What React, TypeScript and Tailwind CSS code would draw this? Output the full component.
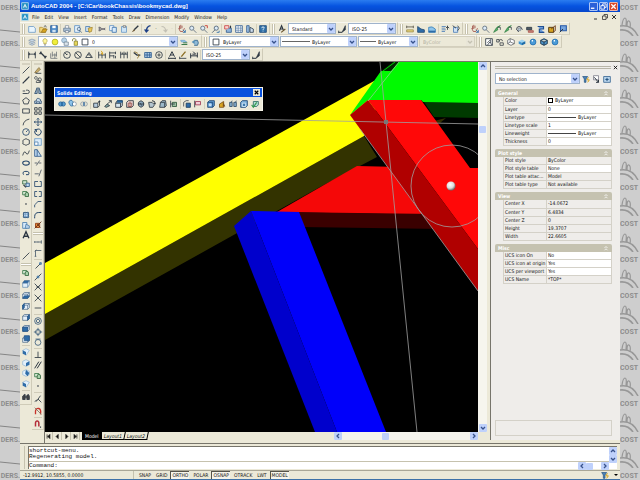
import type { ReactNode } from "react";

const INK = "#2d3742";
const BLUE = "#2f6da8";
const SKY = "#8fc4ea";
const GOLD = "#d9a520";
const GREEN = "#2f9a4a";
const RED = "#c8322a";

function P({ d, c = INK, f = "none", w = 1 }: { d: string; c?: string; f?: string; w?: number }) {
  return <path d={d} stroke={c} fill={f} strokeWidth={w} />;
}

const magnifier = <P d="M6 4a2.5 2.5 0 1 1-5 0a2.5 2.5 0 1 1 5 0M5.5 6L9 9.5" c="#5b6b7c" f="#dcebf7" />;
const cube = <P d="M1 4L3 2H9V7L7 9H1ZM1 4H7V9M7 4L9 2" c="#3f5f7f" f="#e4f0fa" w={0.8} />;
const pan = <P d="M2 1V5M5 1V4M3.5 0V5M1 4L3 8H6L8 4" c="#a05048" />;

const glyphs: Record<string, ReactNode> = {
  new: <P d="M1 2H7L9 4V9H1Z" c="#6f9cc8" f="#e9f5fd" />,
  open: <><P d="M1 3H4L5 4H8V9H1Z" c="#a98428" f="#f3d77c" w={0.8} /><P d="M3 9L5 5H10L8 9Z" c="#8a6a1c" f={GOLD} w={0.8} /><P d="M6 2L8 1L9 3" w={0.8} /></>,
  save: <><P d="M1 1H9V9H1Z" c="#2b5c95" f="#4d8cc8" /><P d="M3 1H7V4H3Z" c="none" f="#fff" /><P d="M3 6H7V9H3Z" c="none" f="#cfe2f3" /></>,
  print: <><P d="M3 4V1H7V4" c="#6f8090" f="#fff" w={0.8} /><P d="M1 4H9V8H1Z" c="#5b7086" f="#a9bfd4" w={0.8} /><P d="M3 7H7V9.5H3Z" c="#5b7086" f="#fff" w={0.8} /></>,
  preview: <><P d="M1 1H7V9H1Z" c="#5c8fc4" f="#e9f5fd" /><P d="M8 5a2 2 0 1 1-4 0a2 2 0 1 1 4 0M7 6.5L9.5 9.5" c="#3b5875" f="#cfe2f3" w={0.8} /></>,
  publish: <><P d="M1 2H6V8H1Z" c="#4f81b4" f="#cfe2f3" /><P d="M4 4L9 3L8 8L5 9Z" c="#9a7a22" f="#e9c75c" w={0.8} /></>,
  cut: <P d="M1 3L9 6M1 7L9 4M1 3.5a1 1 0 1 0 1-1M1 6.5a1 1 0 1 1 1 1" c="#5b5b66" />,
  copy: <><P d="M1 1H6V7H1Z" c="#5c8fc4" f="#fff" /><P d="M4 3H9V9H4Z" c="#3f75ad" f="#d7eafa" /></>,
  paste: <><P d="M2 2H8V9H2Z" c="#6f9cc8" f="#cde4f6" /><P d="M4 1H7V3H4Z" c="#555" f="#eee" w={0.7} /></>,
  match: <><P d="M9 1L4 6" w={1.6} /><P d="M4 5L1 9L5 7Z" c="none" f="#6a5534" /></>,
  undo: <P d="M8 1Q3 2 3 8M1 5.5L3 8.5L5.5 6" c="#1c3f86" w={1.6} />,
  redo: <P d="M2 2Q7 2 7 8M9 5.5L7 8.5L4.5 6" c="#c2c0b4" w={1.3} />,
  pan: <>{pan}<P d="M6 6L9 9M9 6V9H6" c={BLUE} /></>,
  zoom: magnifier,
  zoomwin: <>{magnifier}<P d="M6 1H9V4" c={RED} /></>,
  zoomprev: <><P d="M9 4a2.5 2.5 0 1 1-5 0a2.5 2.5 0 1 1 5 0M5 6L1.5 9.5" c="#4a5e72" f="#dcebf7" /><P d="M7 9H10V7" c={BLUE} /></>,
  props: <><P d="M1 1H6V5H1Z" c="#c44" f="#f6d5d0" /><P d="M6 4H9V9H3V6" c="#355f92" f="#8fb4da" /><P d="M8 1V4" w={1.4} /></>,
  design: <><P d="M1 1H9V9H1Z" c="#355f92" f="#fff" /><P d="M1 4H9M1 6.5H9M4 1V9M7 1V9" c="#5b7fa8" w={0.8} /></>,
  palette: <><P d="M1 1H4V9H1Z" c="#355f92" f="#9dc0e4" /><P d="M5 3L9 5V9H5Z" c="#345" f="#cde" /></>,
  help: <><P d="M1 1H9V9H1Z" c="#1e4b7a" f="#3273aa" /><P d="M3.5 4Q3.5 2.5 5 2.5T6.5 4Q5 5 5 6M5 7V8" c="#fff" /></>,
  textstyle: <><P d="M2 7L4.5 1L7 7M3 5H6" w={1.3} /><P d="M4 9L9 5" c="#6b5530" w={1.4} /></>,
  dimstyle: <><P d="M1 9H5L9 1V6L5 9Z" f={INK} w={0.8} /><P d="M1 7V10" /></>,
  distance: <><P d="M1 2.5H9M1 1V4M9 1V4" c="#5a564a" /><P d="M1 6H9V8.5H1Z" c="#8d7c3a" f="#e9d67d" w={0.8} /></>,
  area: <P d="M1 2L5 5L9 6V9H1Z" c="#254c74" f={BLUE} />,
  mass: <><P d="M1 3Q5 1 9 5V9H1Z" c="#3d83b8" f={SKY} /><P d="M1 7H9V9H1Z" c="none" f={BLUE} /></>,
  list: <><P d="M1 2H6M1 4H5M1 6H6M1 8H5" c="#4f80b8" /><P d="M8 1V6M6 4L8 2L10 4" /></>,
  locate: <><P d="M2 3H7V9H2Z" c="#4f80b8" f="#cfe2f3" /><P d="M1 1L5 4M7 1L9 4L7 7" /></>,
  orbit: <><P d="M9 1L5 3L6 6L1 9L4 4Z" c="#2c7e40" f="#56b06c" w={0.9} /><P d="M6 3H9V6" w={0.9} /></>,
  swivel: <><P d="M2 6Q2 2 5 2T9 6M3 6Q3 8 5 8" c="#444b58" w={1.2} /><P d="M4 4H7V7H4Z" c="#6b7888" f="#b9c6d4" w={0.7} /></>,
  camera: <><P d="M1 3H7V6H1Z" f="#4e5a66" /><P d="M3 7H9V9H3Z" c="#a5423b" f="#c98880" w={0.8} /></>,
  clip: <P d="M1 2H8V5H3V9H9" c="#204f92" f="#6f9fdc" w={1.4} />,
  clipon: <><P d="M1 3H7V9H1Z" c="#5a4218" f={GOLD} w={1.2} /><P d="M4 5L9 1V7L6 9" c="#6d3a1b" /></>,
  zoomview: <><P d="M2 1H9V7H2Z" c="#285aa8" f="#77a5dd" w={1.3} /><P d="M1 9L5 5" w={1.2} /></>,
  layers: <P d="M1 3L5 1.5L9 3L5 5ZM1 5L5 7L9 5M1 7L5 9L9 7" c="#8194a8" f="#c9d8e6" w={0.8} />,
  bulb: <><P d="M7.5 3.5a2.5 2.5 0 1 0-4 2V7H6.5V5.5Q7.5 5 7.5 3.5" c="#a89b3a" f="#fff7a0" w={0.8} /><P d="M4 8.5H6" c="#555" /></>,
  sun: <P d="M8.5 5a3.5 3.5 0 1 1-7 0a3.5 3.5 0 1 1 7 0" c="#a3a316" f="#f0ee3a" w={0.8} />,
  vpfreeze: <><P d="M1 3a3 3 0 1 1 6 0a3 3 0 1 1-6 0" c="#7594b0" f="#b9d4e8" w={0.8} /><P d="M4 5H9V9H4Z" c="#66788a" f="#dde7ef" w={0.8} /></>,
  lock: <><P d="M2 4V2Q2 1 4 1T6 2V4" c="#7c7c30" /><P d="M4 4H8V9H4Z" c="#7c7420" f="#e6d85a" w={0.8} /></>,
  square: <P d="M1.5 1.5H8.5V8.5H1.5Z" f="#fff" />,
  laycur: <><P d="M1 3H6L8 5H2Z" c="#5f97c8" f="#a6d0ee" w={0.8} /><P d="M2 8H9M4 6H9" c="#3b7b4c" w={1.2} /></>,
  layprev: <><P d="M1 5L5 2V8Z" c="none" f="#5890b8" /><P d="M5 3H8Q10 6 8 9H4" c="#35648a" f="#8fb9d6" /></>,
  named: <><P d="M1 1H9V9H1Z" f="#fff" /><P d="M7 2L3 6M7 2V6M3 9L6 5L9 9" w={0.9} /></>,
  wire2: <P d="M1 2H4V5H1ZM4 4a2 2 0 1 1 4 0M5 6H9V9H5Z" c="#454a50" />,
  wire3: <P d="M1 3L4 1L9 3V7L5 9L1 7ZM4 1V5L1 7M4 5L9 7" c="#454a50" f="#fff" w={0.8} />,
  flat: <><P d="M1 4L5 2L9 4L5 6Z" c="none" f="#9cd4f4" /><P d="M1 4L5 6V9L1 7Z" c="none" f="#3f94d0" /><P d="M9 4L5 6V9L9 7Z" c="none" f="#1d6ca8" /></>,
  ball: <><P d="M8.5 5a3.5 3.5 0 1 1-7 0a3.5 3.5 0 1 1 7 0" c="#2470b0" f="#4b9cd8" /><P d="M5 3.5H3.5" c="#fff" w={1.6} /></>,
  gouraud: <P d="M1 3L5 1L9 3V7L5 9L1 7ZM1 3L5 5L9 3M5 5V9" c="#1b3145" f="#4c92c6" />,
  dimlin: <P d="M1 1V9M9 1V9M1 4H9M2.5 3L1 4L2.5 5M7.5 3L9 4L7.5 5" />,
  dimalign: <P d="M2 2L8 8M1 4L3 1M7 9L9 6" w={1.6} />,
  dimord: <P d="M1 3V9H9M3 1V7M6 3V9M8 1V7M3 5H8" c="#555d66" w={0.8} />,
  dimrad: <P d="M9 5a4 4 0 1 1-8 0a4 4 0 1 1 8 0M5 5L2.5 2.5M5 5V3.5" />,
  dimdia: <P d="M9 5a4 4 0 1 1-8 0a4 4 0 1 1 8 0M2.5 2.5L7.5 7.5" />,
  dimang: <P d="M1 8H9L5 2ZM3 5Q6 3 7 7" />,
  quick: <><P d="M1 1V9M5 3V9M9 3V9M1 5H9" /><P d="M4 0L6 3H4L6 5" c={GOLD} w={1.2} /></>,
  baseline: <P d="M1 1V9M1 2.5H8M1 6H6M8 1V4M6 5V9M8 6V9" />,
  contin: <P d="M1 1V9M5 1V9M9 1V9M1 4H9M3 2V4M7 2V4" />,
  leader: <><P d="M1 2L5 5H9" w={1.5} /><P d="M5 9Q8 8 7 4M2 1L6 3" c="#8b6d22" /></>,
  tol: <><P d="M1 2H9V8H1Z" c="#305f92" f="#a9c7e4" /><P d="M4 2V8M7 2V8M1 5H9" c="#305f92" /></>,
  center: <P d="M9 5a4 4 0 1 1-8 0a4 4 0 1 1 8 0M5 3V7M3 5H7" />,
  dimedit: <P d="M2 7L5 1L8 7M3 5H7M1 9H9M1 8V10M9 8V10" w={1.2} />,
  dimtedit: <><P d="M1 9H9M1 7V10" /><P d="M3 7L8 1" c="#8b6d22" w={1.6} /></>,
  dimupdate: <P d="M1 3V9M9 2V8M1 6H9M4 1L7 4H3" w={1.2} />,
  line: <P d="M1 9L9 1" />,
  xline: <P d="M1 9L9 1M3.5 6.5L6.5 3.5" w={1.4} />,
  pline: <P d="M1 8H7Q9 8 9 6T7 4H5M1 5H4" />,
  polygon: <P d="M5 1L9 4L7.5 8.5H2.5L1 4Z" />,
  rect: <P d="M1 2.5H9V7.5H1Z" />,
  arc: <P d="M1.5 9Q2 3 9 1.5" />,
  circle: <P d="M9 5a4 4 0 1 1-8 0a4 4 0 1 1 8 0M5 5L7 3" c="#27486c" />,
  cloud: <P d="M3 2Q5 0 7 2Q10 2 9 5Q10 8 7 8Q5 10 3 8Q0 8 1.5 5Q0 3 3 2" />,
  spline: <P d="M1 8Q3 1 5 5T9 2" />,
  ellipse: <P d="M1 5a4 2.5 0 1 1 8 0a4 2.5 0 1 1-8 0" c="#27486c" w={1.3} />,
  ellarc: <P d="M2 7Q0 3 5 3T8 7H5" c="#27486c" w={1.2} />,
  insert: <><P d="M1 1H6V5H1Z" c="#3a6b45" f="#cfe3cf" /><P d="M5 4H9V8H5Z" c="#2b5a86" f="#bcd7ee" /><P d="M2 6L5 9" w={1.4} /></>,
  block: <><P d="M1 2H6V6H1Z" c="#3b7a4a" f="#d7ebd5" /><P d="M4 5a2 2 0 1 1 4 0V8H4Z" c="#31653b" f="#a8d2ab" /></>,
  point: <P d="M4.5 4.5H5.5V5.5H4.5Z" w={0.8} />,
  hatch: <><P d="M2 2H8V8H2Z" c="#27486c" f="#c6dcf0" /><P d="M1 4H9M1 7H9M4 1V9M7 1V9" c="#4e7fae" w={0.7} /></>,
  region: <><P d="M1 2H6V9H1Z" c="#4e7fae" f="#d7eafa" /><P d="M5 4L9 6V9H4Z" c="#4e7fae" f="#b4d0ea" /></>,
  mtext: <P d="M1.5 9L5 1L8.5 9M3 6.5H7" w={1.6} />,
  erase: <><P d="M1 8L6 2L8 4L4 8Z" c="#786438" f="#c9ae6c" w={0.8} /><P d="M2 9H9" /></>,
  copyobj: <P d="M1 2a1.5 1.5 0 1 1 3 1a1.5 1.5 0 1 1-3-1M5 4a2 2 0 1 1 4 1a2 2 0 1 1-4-1M3 7a1.5 1.5 0 1 1 5 1H3Z" w={0.9} />,
  mirror: <P d="M4 1V8H1ZM6 1V8H9Z" c="#2e4d6e" f="#a4bdd4" />,
  offset: <P d="M1 8V5H3Q3 1 6 2T8 5H9V8ZM3 8V6H7V8" c="#2e4d6e" f="#c7dae9" w={0.9} />,
  array: <P d="M1 1H4V4H1ZM6 1H9V4H6ZM1 6H4V9H1ZM6 6H9V9H6Z" />,
  move: <P d="M5 0.5V9.5M0.5 5H9.5M3.5 2L5 0.5L6.5 2M3.5 8L5 9.5L6.5 8M2 3.5L0.5 5L2 6.5M8 3.5L9.5 5L8 6.5" c="#27486c" />,
  rotate: <P d="M3 2Q8 0 9 5Q8 9 5 9Q1 8 1 5Q1 3 3 2V5M3 2H1" c="#27486c" w={1.2} />,
  scale: <><P d="M1 1H9V9H1Z" c="#6d9cc8" f="#dcecf9" /><P d="M1 5H5V9H1Z" c="#5684b2" f="#fff" /></>,
  stretch: <P d="M1 1V9H4V1ZM4 1L9 9H4" c="#2f5a8a" f="#c1daf0" />,
  trim: <P d="M1 5H4M6 5H9M3 8L7 2" c="#4b5661" />,
  extend: <P d="M1 6H6M6 9L9 1" c="#4b5661" />,
  break1: <P d="M5 2H1V8H9V2H7" c="#27486c" />,
  break2: <P d="M4 2H1V8H4M6 2H9V8H6" c="#27486c" />,
  chamfer: <P d="M1 9V6L5 2H9" c="#27486c" />,
  fillet: <P d="M1 9V7Q1 2 6 2H9" c="#27486c" w={1.2} />,
  explode: <><P d="M2 3H7V8H2Z" c="#9c4a20" f="#e68a3a" w={1.2} /><P d="M1 9L9 1M4 4L8 8" c="#5f2b16" /></>,
  track: <P d="M1 5H9M1 4V6M9 3V7M5 4.5V5.5" c="#4a5b6c" />,
  from: <P d="M2 9V2H9M1 3L3 1M1 9H3" c="#4a5b6c" />,
  endpoint: <><P d="M2 8L8 2" /><P d="M7 1H9V3H7Z" c={BLUE} /></>,
  midpoint: <><P d="M1 9L9 1" /><P d="M4 4H6V6H4Z" c={BLUE} /></>,
  cross: <P d="M1 1L9 9M9 1L1 9M3 5H7" />,
  cross2: <P d="M1 1L9 9M9 1L1 9" />,
  dash: <P d="M1 5H9" />,
  snapcen: <P d="M9 5a4 4 0 1 1-8 0a4 4 0 1 1 8 0M7 5a2 2 0 1 1-4 0a2 2 0 1 1 4 0" c="#3b5b7b" />,
  quad: <P d="M8 5a3 3 0 1 1-6 0a3 3 0 1 1 6 0M5 0V4M5 6V10M0 5H4M6 5H10" c="#3b5b7b" />,
  tangent: <P d="M8.5 5.5a3.5 3.5 0 1 1-7 0a3.5 3.5 0 1 1 7 0M2 1.5H8" c="#3b5b7b" />,
  perp: <P d="M1 8H9M5 8V1" />,
  parallel: <P d="M1 9L6 1M4 9L9 1" w={1.2} />,
  near: <P d="M1 8L4 6M3 8L8 1M5 5L9 9" />,
  nosnap: <><P d="M2 9V5Q3 1 6 2T8 9" c={RED} w={1.6} /><P d="M1 1L9 9" c="#7d6e5e" /></>,
  magnet: <><P d="M2 8V4Q2 1.5 4 1.5T6 4V8" c="#b32d3a" w={1.8} /><P d="M8 8V9.5" w={1.4} /></>,
  viewtop: <><P d="M1 4L3 1H9L7 4Z" c="#1d4d80" f={BLUE} w={0.8} /><P d="M1 4H7V9H1ZM7 4L9 1V6L7 9" c="#5c86ae" f="#e3f1fb" w={0.8} /></>,
  viewbot: <>{cube}<P d="M1 9L3 6H9L7 9Z" c="#1d4d80" f={BLUE} w={0.8} /></>,
  viewleft: <>{cube}<P d="M1 4L3 2V7L1 9Z" c="#1d4d80" f={BLUE} w={0.8} /></>,
  viewright: <>{cube}<P d="M7 4L9 2V7L7 9Z" c="#1d4d80" f={BLUE} w={0.8} /></>,
  viewfront: <>{cube}<P d="M1 4H7V9H1Z" c="#1d4d80" f={BLUE} w={0.8} /></>,
  viewback: <>{cube}<P d="M3 1H9V7H3Z" c="#1d4d80" f={BLUE} w={0.8} /></>,
  iso1: <><P d="M1 3L5 1L9 3L5 9Z" c="#8fb4d2" f="#e3f1fb" w={0.8} /><P d="M1 3L5 5V9L1 7Z" c="none" f={BLUE} /></>,
  iso2: <><P d="M1 3L5 1L9 3V7L5 9L1 7Z" c="#8fb4d2" f="#e3f1fb" w={0.8} /><P d="M9 3L5 5V9L9 7Z" c="none" f={BLUE} /></>,
  iso3: <><P d="M1 3L5 1L9 3V7L5 9L1 7Z" c="#8fb4d2" f="#e3f1fb" w={0.8} /><P d="M5 1L9 5L7 9L4 6Z" c="none" f={BLUE} /></>,
  binoc: <><P d="M1 4L3 2H4V8H1ZM6 3L8 2L9 4V8H6Z" f="#444" /><P d="M4 5H6" w={2} /></>,
  union: <P d="M1 5a2.5 2.5 0 1 1 5 0a2.5 2.5 0 1 1-5 0M4 5a2.5 2.5 0 1 1 5 0a2.5 2.5 0 1 1-5 0" c="#1d5c93" f="#5ea5d8" />,
  subtract: <><P d="M4 5a2.5 2.5 0 1 1 5 0a2.5 2.5 0 1 1-5 0" c="#7a8a9a" f="#fff" w={0.8} /><P d="M1 5a2.5 2.5 0 1 1 4-2Q3 5 5 7A2.5 2.5 0 0 1 1 5" c="#1d5c93" f="#8fc4ea" w={0.8} /></>,
  intersect: <><P d="M1 5a2.5 2.5 0 1 1 5 0a2.5 2.5 0 1 1-5 0M4 5a2.5 2.5 0 1 1 5 0a2.5 2.5 0 1 1-5 0" c="#7a8a9a" w={0.8} /><P d="M5 3V7" c={BLUE} w={1.4} /></>,
  extrude: <><P d="M1 4H6V9H1Z" f="#b7ccdd" /><P d="M6 4L8 1M6 9L8 7V1M7 2H9" /></>,
  pathface: <><P d="M1 8L4 5L7 7L3 9Z" f="#7fa4a0" /><P d="M4 5L9 1M6 1H9V4" /></>,
  moveface: <><P d="M1 4L3 1H9V7L7 9H1Z" f="#d7e6ee" /><P d="M1 4H7V9" w={1.2} /><P d="M3 1H9V3H3Z" c="#1c5380" f={BLUE} w={0.8} /></>,
  offface: <><P d="M1 3L3 1H9V7L7 9H1Z" f="#ead3d0" /><P d="M3 4H7V8H3ZM5 2V9" c="#8b3e38" w={0.8} /></>,
  delface: <><P d="M2 3L5 1L8 3V7L5 9L2 7Z" f="#8aa6bb" /><P d="M1 5H9M4 4L6 7" /></>,
  rotface: <><P d="M1 3H5L8 6L6 9H2Z" f="#b4c5cf" /><P d="M5 1Q9 1 9 5M7 4L9 5" w={1.2} /></>,
  taper: <><P d="M2 3L4 1H8L9 7L7 9H1Z" f="#9bb8c9" /><P d="M2 3H7V9" /></>,
  greenface: <><P d="M3 3H8V8H3Z" c="#2c5538" f="#9dc0a2" /><P d="M1 1V9M1 5H6" /></>,
  copyface: <><P d="M4 4H9V9H4Z" c="#1d3c5c" f={BLUE} /><P d="M1 8V3L4 1H7" w={0.9} /></>,
  redface: <><P d="M2 2H8V6H2Z" c="#a23a55" f="#f0cdd6" /><P d="M1 1V9" /></>,
  imprint: <><P d="M1 3L3 1H9V7L7 9H1Z" c="#1b4675" f="#639fd6" /><P d="M1 3H7V9" c="#1b4675" /><P d="M3 5H5V7H3Z" c="#e8f4ff" /></>,
  clean: <><P d="M2 5L7 2V9H2Z" c="#80561c" f={GOLD} /><P d="M6 2L9 8H6Z" c="none" f="#7b4f17" /></>,
  separate: <P d="M1 3H4V8H1ZM6 3H9V8H6ZM3 3L4 1M8 3L9 1" c="#2b4a68" f="#87b0d0" />,
  shell: <><P d="M1 3L3 1H9V7L7 9H1Z" c="#1b4675" f="#7eb2dc" /><P d="M3 4H7V8H3Z" c="#dff0fd" f="#3d79ac" /></>,
  check: <><P d="M3 2H9V6L7 8H3Z" c="#2f6e66" f="#b3ddd5" /><P d="M1 6L3 9L7 3" c={GREEN} w={1.3} /></>,
  filter: <><P d="M1 2H7L5 5V9H3V5Z" c="#1f4f7e" f="#4d83b5" w={0.8} /><P d="M8 3L6 6H9L7 9" c={GOLD} w={1.2} /></>,
  pick: <><P d="M2 1H8V6H2Z" c="#667" f="#fff" w={0.8} /><P d="M3 3L8 9M8 6V9H5" w={1.2} /></>,
  pickadd: <><P d="M1 2H9V9H1Z" c="#3b6794" f="#bcd7ee" /><P d="M5 3.5V7.5M3 5.5H7" c="#1f4f7e" w={1.2} /></>,
  sheet: <><P d="M1 1H9V9H1Z" c="#bde" f="#1f8fc0" /><P d="M3 7L5 3L7 7M4 6H6" c="#fff" /></>,
};

function Icon({ name }: { name: string }) {
  return <svg viewBox="-1 -1 12 12" className="size-2.5 shrink-0" aria-hidden="true">{glyphs[name]}</svg>;
}

function Tool({ name }: { name: string }) {
  return <button type="button" aria-label={name} className="size-2.5 shrink-0"><Icon name={name} /></button>;
}

function Sep() {
  return <span className="h-2.5 w-px shrink-0 bg-[#d3cfbb]" />;
}

function Grip() {
  return <span className="mr-px h-2.5 w-[3px] shrink-0 border-x border-[#c6c2ae] bg-white" />;
}

// "|" stands for a separator between two runs of buttons
function Tools({ list }: { list: string }) {
  return (
    <>
      {list.split(" ").map((name, i) => (name === "|" ? <Sep key={i} /> : <Tool key={i} name={name} />))}
    </>
  );
}

function Bar({ children }: { children: ReactNode }) {
  return <div className="flex h-[13px] shrink-0 items-center gap-px border-y border-r border-t-[#f8f7f0] border-r-[#cfcbb8] border-b-[#d6d2c0] pr-px pl-0.5">{children}</div>;
}

function Chevron({ d = "M3 4L5 6L7 4", muted = false }: { d?: string; muted?: boolean }) {
  return (
    <span className={muted ? "flex w-2 shrink-0 items-center justify-center self-stretch bg-[#e9e6d8] text-[#c4c1b2]" : "flex w-2 shrink-0 items-center justify-center self-stretch rounded-[1px] bg-[#bfd1fb] text-[#37528c]"}>
      <svg viewBox="2 2 6 6" className="size-1.5" aria-hidden="true"><path d={d} fill="none" stroke="currentColor" strokeWidth="1.3" /></svg>
    </span>
  );
}

function Combo({ label, value, size, icons = [], rule, muted = false }: { label: string; value: string; size: string; icons?: string[]; rule?: string; muted?: boolean }) {
  return (
    <label className={`flex h-[11px] shrink-0 items-center border pl-px ${size} ${muted ? "border-[#d3cfbd] text-[#b5b2a2]" : "border-[#9fb3cc] bg-white"}`}>
      {icons.map((name) => <Icon key={name} name={name} />)}
      {rule && <span className={`h-px shrink-0 bg-[#666] ${rule}`} />}
      <select aria-label={label} disabled={muted} className="min-w-0 flex-1 appearance-none bg-transparent pl-0.5 leading-[8px] outline-none disabled:opacity-100">
        <option>{value}</option>
      </select>
      <Chevron muted={muted} />
    </label>
  );
}

const menus = ["File", "Edit", "View", "Insert", "Format", "Tools", "Draw", "Dimension", "Modify", "Window", "Help"];

function TitleBar() {
  return (
    <header className="flex h-3 items-center gap-px bg-linear-to-b from-[#2a7cf0] via-[#0653e0] to-[#0647cb] pr-0.5 text-white">
      <Icon name="sheet" />
      <h1 className="flex-1 font-['Liberation_Sans',sans-serif] text-[6px] leading-3 font-bold">AutoCAD 2004 - [C:\Car\bookChassis\bookmycad.dwg]</h1>
      <button type="button" aria-label="Minimize" className="size-[9px] rounded-[1px] border border-[#a9c3f5] bg-[#2c61d8]">
        <svg viewBox="0 0 8 8" fill="none" stroke="#fff"><path d="M1 6H5" strokeWidth="1.5" /></svg>
      </button>
      <button type="button" aria-label="Restore" className="size-[9px] rounded-[1px] border border-[#a9c3f5] bg-[#2c61d8]">
        <svg viewBox="0 0 8 8" fill="none" stroke="#fff"><path d="M3 3V1H7V5H5M1 3H5V7H1Z" /></svg>
      </button>
      <button type="button" aria-label="Close" className="size-[9px] rounded-[1px] border border-[#efb5a5] bg-[#d9482a]">
        <svg viewBox="0 0 8 8" fill="none" stroke="#fff"><path d="M1.5 1.5L6.5 6.5M6.5 1.5L1.5 6.5" strokeWidth="1.5" /></svg>
      </button>
    </header>
  );
}

function MenuBar() {
  return (
    <nav className="flex h-2.5 items-center pr-0.5 leading-[8px]">
      <Icon name="sheet" />
      <div className="flex flex-1 gap-[5px] pl-0.5">
        {menus.map((m) => <button type="button" key={m}>{m}</button>)}
      </div>
      <div className="flex gap-px text-[#333]">
        <button type="button" aria-label="Minimize drawing" className="size-2"><svg viewBox="0 0 8 8" fill="none" stroke="currentColor"><path d="M2 6H5" /></svg></button>
        <button type="button" aria-label="Restore drawing" className="size-2"><svg viewBox="0 0 8 8" fill="none" stroke="currentColor"><path d="M3 3V1.5H6.5V5H5M1.5 3H5V6.5H1.5Z" strokeWidth="0.8" /></svg></button>
        <button type="button" aria-label="Close drawing" className="size-2"><svg viewBox="0 0 8 8" fill="none" stroke="currentColor"><path d="M2 2L6 6M6 2L2 6" /></svg></button>
      </div>
    </nav>
  );
}

function Toolbars() {
  return (
    <div>
      <div className="flex">
        <Bar><Grip /><Tools list="new open save | print preview publish | cut copy paste match | undo" /><span className="w-1 text-center">·</span><Tool name="redo" /><span className="w-1 text-center text-[#aaa]">·</span><Tools list="| pan zoom zoomwin zoomprev | props design palette | help" /></Bar>
        <Bar><Grip /><Tool name="textstyle" /><Combo label="Text style" value="Standard" size="w-12" /><Tool name="dimstyle" /><Combo label="Dimension style" value="ISO-25" size="w-12" /></Bar>
        <Bar><Grip /><Tools list="distance area mass | list locate" /></Bar>
        <Bar><Grip /><Tools list="pan zoom orbit orbit swivel camera clip clipon zoomview" /></Bar>
      </div>
      <div className="flex">
        <Bar><Grip /><Tool name="layers" /><Combo label="Layer" value="0" size="w-[140px]" icons={["bulb", "sun", "vpfreeze", "lock", "square"]} /><Tools list="laycur layprev" /></Bar>
        <Bar>
          <Grip />
          <Combo label="Color" value="ByLayer" size="w-[70px]" icons={["square"]} />
          <Combo label="Linetype" value="ByLayer" size="w-[77px]" rule="w-7" />
          <Combo label="Lineweight" value="ByLayer" size="w-[60px]" rule="w-4" />
          <Combo label="Plot style" value="ByColor" size="w-14" muted />
        </Bar>
        <Bar><Grip /><Tools list="named wire2 wire3 flat ball gouraud ball" /></Bar>
      </div>
      <div className="flex">
        <Bar><Grip /><Tools list="dimlin dimalign dimord | dimrad dimdia dimang | quick baseline contin | leader tol center | dimedit dimtedit dimupdate |" /><Combo label="Current dimension style" value="ISO-25" size="w-12" /><Tool name="dimstyle" /></Bar>
      </div>
    </div>
  );
}

function Strip({ list, size }: { list: string; size: string }) {
  return (
    <div className={`flex flex-col items-center justify-between ${size}`}>
      {list.split(" ").map((name, i) => (name === "_" ? <span key={i} className="size-2.5" /> : <Tool key={i} name={name} />))}
    </div>
  );
}

function RowGrip() {
  return <span className="my-0.5 h-[3px] w-2.5 border-y border-[#c6c2ae] bg-white" />;
}

function SideTools() {
  return (
    <aside className="flex w-6 shrink-0 items-start justify-between">
      <div className="flex w-3 flex-col items-center border-r border-b border-[#cfcbb8] pb-0.5">
        <span className="mt-0.5 h-0.5 w-2 bg-[#d6d2c0]" />
        <Strip size="h-[196px]" list="line xline pline polygon rect arc circle cloud spline ellipse ellarc insert block point hatch region mtext _ line" />
        <RowGrip />
        <Strip size="h-[76px]" list="block viewtop viewbot viewleft viewright viewfront viewback" />
        <span className="my-px h-px w-2 bg-[#cfcbb8]" />
        <Strip size="h-[42px]" list="iso1 iso2 iso3 iso1" />
        <span className="my-px h-px w-2 bg-[#cfcbb8]" />
        <Tool name="binoc" />
      </div>
      <div className="flex w-3 flex-col items-center border-r border-b border-[#cfcbb8]">
        <span className="mt-0.5 h-0.5 w-2 bg-[#d6d2c0]" />
        <Strip size="h-[165px]" list="erase copyobj mirror offset array move rotate scale stretch trim extend break1 break2 chamfer fillet explode" />
        <RowGrip />
        <Strip size="h-[21px]" list="track from" />
        <span className="my-px h-px w-2 bg-[#cfcbb8]" />
        <Strip size="h-[52px]" list="endpoint midpoint cross cross2 dash" />
        <span className="my-px h-px w-2 bg-[#cfcbb8]" />
        <Strip size="h-[31px]" list="snapcen quad tangent" />
        <span className="my-px h-px w-2 bg-[#cfcbb8]" />
        <Strip size="h-[41px]" list="perp parallel block point" />
        <span className="my-px h-px w-2 bg-[#cfcbb8]" />
        <Strip size="h-[22px]" list="near nosnap" />
        <span className="my-px h-px w-2 bg-[#cfcbb8]" />
        <Tool name="magnet" />
      </div>
    </aside>
  );
}

function SolidsEditing() {
  return (
    <section className="absolute top-[25px] left-[9px] border border-[#f7f5ea] bg-[#ece9d8]">
      <div className="flex h-[9px] items-center justify-between bg-[#0a52dd] px-0.5 text-white">
        <h2 className="leading-[8px] font-bold">Solids Editing</h2>
        <button type="button" aria-label="Close Solids Editing" className="size-[7px] bg-[#ece9d8] text-black">
          <svg viewBox="0 0 8 8" fill="none" stroke="currentColor"><path d="M2 2L6 6M6 2L2 6" strokeWidth="1.4" /></svg>
        </button>
      </div>
      <div className="flex h-[13px] items-center gap-px px-0.5">
        <Tools list="union subtract intersect | extrude pathface moveface offface delface rotface taper greenface | copyface redface | imprint clean separate shell check" />
      </div>
    </section>
  );
}

function Model() {
  return (
    <svg viewBox="45 62 433 370" preserveAspectRatio="xMidYMid slice" className="absolute inset-0 h-full w-full bg-black" role="img" aria-label="Chassis model">
      <defs>
        <radialGradient id="ball" cx="0.4" cy="0.35" r="0.65">
          <stop offset="0" stopColor="#fff" />
          <stop offset="0.6" stopColor="#ddd" />
          <stop offset="1" stopColor="#666" />
        </radialGradient>
      </defs>
      <polygon points="430,122 446,118 440,123" fill="#332f00" />
      <polygon points="45,314 364,136 377,157 320,187 45,340" fill="#333300" />
      <polygon points="45,263 374,81 380,100 364,136 45,314" fill="#ffff00" />
      <polygon points="277,212 357,166 400,167 440,215" fill="#f50808" />
      <polygon points="280,212 435,214 442,229 300,227" fill="#3a0000" />
      <polygon points="424,102 478,103 478,118 434,117" fill="#003a00" />
      <polygon points="381,71 393,62 399,62 391,71" fill="#002800" />
      <polygon points="350,115 381,71 391,71 399,62 478,62 478,103 423,102 421,100 368,100" fill="#00fa00" />
      <polygon points="368,100 421,100 470,168 478,168 478,249" fill="#ff0808" />
      <polygon points="350,115 368,100 478,249 478,291" fill="#b00000" />
      <polygon points="251,211 299,212 386,432 337,432" fill="#0000fa" />
      <polygon points="234,226 251,211 337,432 315,432" fill="#0000cc" />
      <g fill="none" stroke="#a0a0a0" strokeWidth="0.8">
        <path d="M383 71L395 62" stroke="#00fa00" />
        <path d="M368 101L399 62" stroke="#8fd08f" />
        <path d="M45 115L478 124" />
        <path d="M380 62L417 432" />
        <path d="M360 129L478 291" />
        <circle cx="452" cy="186" r="41" />
      </g>
      <rect x="384" y="120" width="4" height="4" fill="#777" />
      <circle cx="451" cy="186" r="4.5" fill="url(#ball)" />
    </svg>
  );
}

function ArrowButton({ label, d }: { label: string; d: string }) {
  return <button type="button" aria-label={label} className="flex size-2 shrink-0"><Chevron d={d} /></button>;
}

function Drawing() {
  return (
    <main className="flex min-w-0 flex-1 flex-col border-t border-l border-[#77756b] pr-[3px]">
      <div className="flex flex-1">
        <div className="relative flex-1 overflow-hidden">
          <Model />
          <SolidsEditing />
        </div>
        <div className="flex w-[9px] flex-col items-center bg-[#f6f5ee]">
          <ArrowButton label="Scroll up" d="M3 6L5 4L7 6" />
          <span className="mt-14 mb-auto size-[7px] rounded-[1px] bg-[#bfd1fb]" />
          <ArrowButton label="Scroll down" d="M3 4L5 6L7 4" />
        </div>
      </div>
      <div className="mb-[3px] flex h-2 items-center pr-[9px]">
        <div className="flex gap-px">
          {["M7 2V8L4 5ZM3 2V8", "M6 2V8L3 5Z", "M4 2V8L7 5Z", "M3 2V8L6 5ZM7 2V8"].map((d, i) => (
            <button type="button" key={d} aria-label={["First", "Previous", "Next", "Last"][i]} className="size-2 border-r border-[#c6c2ae]">
              <svg viewBox="0 0 10 10" fill="#111" stroke="#111"><path d={d} /></svg>
            </button>
          ))}
        </div>
        <div className="ml-0.5 flex h-full leading-[8px]">
          <button type="button" className="bg-black px-[3px] text-white">Model</button>
          <button type="button" className="-skew-x-12 border-r border-b border-black px-0.5">Layout1</button>
          <button type="button" className="-skew-x-12 border-r border-b border-black px-0.5">Layout2</button>
        </div>
        <div className="ml-auto flex w-1/3 items-center justify-between bg-[#f6f5ee]">
          <ArrowButton label="Scroll left" d="M6 3L4 5L6 7" />
          <span className="mr-10 size-[7px] rounded-[1px] bg-[#bfd1fb]" />
          <ArrowButton label="Scroll right" d="M4 3L6 5L4 7" />
        </div>
      </div>
    </main>
  );
}

type Row = { name: string; value: string; mark?: "swatch" | "rule"; fixed?: boolean };

const sections: { title: string; rows: Row[] }[] = [
  {
    title: "General",
    rows: [
      { name: "Color", value: "ByLayer", mark: "swatch" },
      { name: "Layer", value: "0" },
      { name: "Linetype", value: "ByLayer", mark: "rule" },
      { name: "Linetype scale", value: "1" },
      { name: "Lineweight", value: "ByLayer", mark: "rule" },
      { name: "Thickness", value: "0" },
    ],
  },
  {
    title: "Plot style",
    rows: [
      { name: "Plot style", value: "ByColor", fixed: true },
      { name: "Plot style table", value: "None" },
      { name: "Plot table attac...", value: "Model", fixed: true },
      { name: "Plot table type", value: "Not available", fixed: true },
    ],
  },
  {
    title: "View",
    rows: [
      { name: "Center X", value: "-14.0672", fixed: true },
      { name: "Center Y", value: "6.4834", fixed: true },
      { name: "Center Z", value: "0", fixed: true },
      { name: "Height", value: "19.3707", fixed: true },
      { name: "Width", value: "22.6605", fixed: true },
    ],
  },
  {
    title: "Misc",
    rows: [
      { name: "UCS icon On", value: "No" },
      { name: "UCS icon at origin", value: "Yes" },
      { name: "UCS per viewport", value: "Yes" },
      { name: "UCS Name", value: "*TOP*", fixed: true },
    ],
  },
];

function Properties() {
  return (
    <aside className="mb-[3px] flex w-[130px] shrink-0 flex-col border-t border-l border-[#77756b] bg-[#efedea] px-1 pt-[3px] pr-2">
      <div className="mb-1 flex h-1 items-center gap-0.5">
        <span className="h-[3px] flex-1 border-y border-[#b8b5a8]" />
        <button type="button" aria-label="Close properties" className="-mr-1.5 size-[5px]">
          <svg viewBox="0 0 6 6" fill="none" stroke="#000"><path d="M1 1L5 5M5 1L1 5" /></svg>
        </button>
      </div>
      <div className="mb-[5px] flex items-center justify-between">
        <Combo label="Selection" value="No selection" size="w-[85px]" />
        <Tools list="filter pick pickadd" />
      </div>
      {sections.map((s) => (
        <section key={s.title} className="mb-[3px]">
          <h2 className="flex h-2 items-center justify-between rounded-t-xs bg-[#c5c2b0] px-[3px] leading-[8px] font-bold text-white">
            {s.title}
            <svg viewBox="0 0 8 8" className="size-1.5" fill="none" stroke="#fff" aria-hidden="true"><path d="M2 4L4 2L6 4M2 7L4 5L6 7" /></svg>
          </h2>
          <div className="pl-2">
            <table className="w-full table-fixed border-collapse leading-[7px]">
              <tbody>
                {s.rows.map((r) => (
                  <tr key={r.name} className="h-2">
                    <th scope="row" className="w-[43px] border-b border-l border-[#d4d1c8] p-0 pl-px text-left font-normal whitespace-nowrap">{r.name}</th>
                    <td className={`border-r border-b border-l border-[#d4d1c8] p-0 pl-px whitespace-nowrap ${r.fixed ? "" : "bg-white"}`}>
                      <span className="flex items-center">
                        {r.mark === "swatch" && <span className="mr-0.5 size-[5px] border border-black" />}
                        {r.mark === "rule" && <span className="mr-0.5 h-px w-7 bg-[#444]" />}
                        {r.value}
                      </span>
                    </td>
                  </tr>
                ))}
              </tbody>
            </table>
          </div>
        </section>
      ))}
      <div className="mt-auto mb-1 h-4 border border-[#d4d1c8]" />
    </aside>
  );
}

function CommandLine() {
  return (
    <section className="mx-[3px] mt-0.5 flex h-[23px] pl-px font-['Liberation_Mono',monospace] text-[6px] leading-[6px]">
      <span className="mr-0.5 w-0.5 border-l border-[#c6c2ae]" />
      <div className="flex flex-1 border-t border-l border-[#77756b] bg-white">
        <div className="flex min-w-0 flex-1 flex-col pt-px">
          <p>shortcut-menu.</p>
          <p>Regenerating model.</p>
          <label className="mt-px flex flex-1 items-center border-t border-[#c6c2ae]">
            Command:
            <input type="text" className="h-[7px] min-w-0 flex-1 outline-none" />
            <ArrowButton label="Scroll command left" d="M6 3L4 5L6 7" />
            <span className="mr-2 h-[7px] w-[7px] rounded-[1px] bg-[#bfd1fb]" />
            <ArrowButton label="Scroll command right" d="M4 3L6 5L4 7" />
          </label>
        </div>
        <div className="flex w-2 flex-col">
          <ArrowButton label="Previous lines" d="M3 6L5 4L7 6" />
          <ArrowButton label="Next lines" d="M3 4L5 6L7 4" />
        </div>
      </div>
    </section>
  );
}

const modes = [
  { name: "SNAP", on: false },
  { name: "GRID", on: false },
  { name: "ORTHO", on: true },
  { name: "POLAR", on: false },
  { name: "OSNAP", on: true },
  { name: "OTRACK", on: false },
  { name: "LWT", on: false },
  { name: "MODEL", on: true },
];

function StatusBar() {
  return (
    <footer className="mt-px flex h-[10px] items-center border-t border-b border-t-[#aaa797] border-b-[#3f72a8] px-0.5 leading-[8px]">
      <span className="w-28 border-r border-[#c6c2ae] pl-px">-12.9912, 10.5855, 0.0000</span>
      <div className="flex gap-0.5 pl-[3px]">
        {modes.map((m) => (
          <button type="button" key={m.name} className={`border-t border-l px-px leading-[7px] ${m.on ? "border-[#55534a] bg-[#f6f4ea]" : "border-transparent"}`}>{m.name}</button>
        ))}
      </div>
      <div className="ml-auto flex items-center gap-1">
        <Icon name="filter" />
        <svg viewBox="0 0 4 4" className="size-1" aria-hidden="true"><path d="M0 1H4L2 3Z" /></svg>
      </div>
    </footer>
  );
}

const tiles = Array.from({ length: 14 }, (_, i) => i);

function Wallpaper({ side }: { side: "left" | "right" }) {
  return (
    <div className="relative w-5 shrink-0 overflow-hidden bg-[#cecece] font-['Roboto',sans-serif] text-[7px] font-bold text-[#8c8c8c]" aria-hidden="true">
      <div className="absolute inset-0">
        {tiles.map((i) => (
          <div key={i} className="flex h-9 flex-col">
            <span className={side === "left" ? "flex h-4 items-center justify-end" : "flex h-4 items-center"}>{side === "left" ? "DERS." : "COST"}</span>
            {side === "left" ? (
              <svg viewBox="0 0 20 20" className="size-5" fill="none" stroke="#858585"><path d="M0 14L20 16" /></svg>
            ) : (
              <svg viewBox="0 0 20 20" className="size-5" fill="none" stroke="#979797">
                <path d="M0 10Q12 8 18 20M0 14Q8 13 13 20" strokeWidth="1.6" />
                <path d="M2 9Q3 2 5 2T6 10M7 10Q7 4 9 5T10 12" strokeWidth="1.2" />
              </svg>
            )}
          </div>
        ))}
      </div>
    </div>
  );
}

export default function App() {
  return (
    <div className="flex min-h-screen w-full font-['DejaVu_Sans_Condensed','DejaVu_Sans',sans-serif] text-[5px] text-[#111]">
      <Wallpaper side="left" />
      <div className="flex min-w-0 flex-1 flex-col bg-[#ece9d8]">
        <TitleBar />
        <MenuBar />
        <Toolbars />
        <div className="flex flex-1 border-b border-[#77756b]">
          <SideTools />
          <Drawing />
          <Properties />
        </div>
        <CommandLine />
        <StatusBar />
      </div>
      <Wallpaper side="right" />
    </div>
  );
}
